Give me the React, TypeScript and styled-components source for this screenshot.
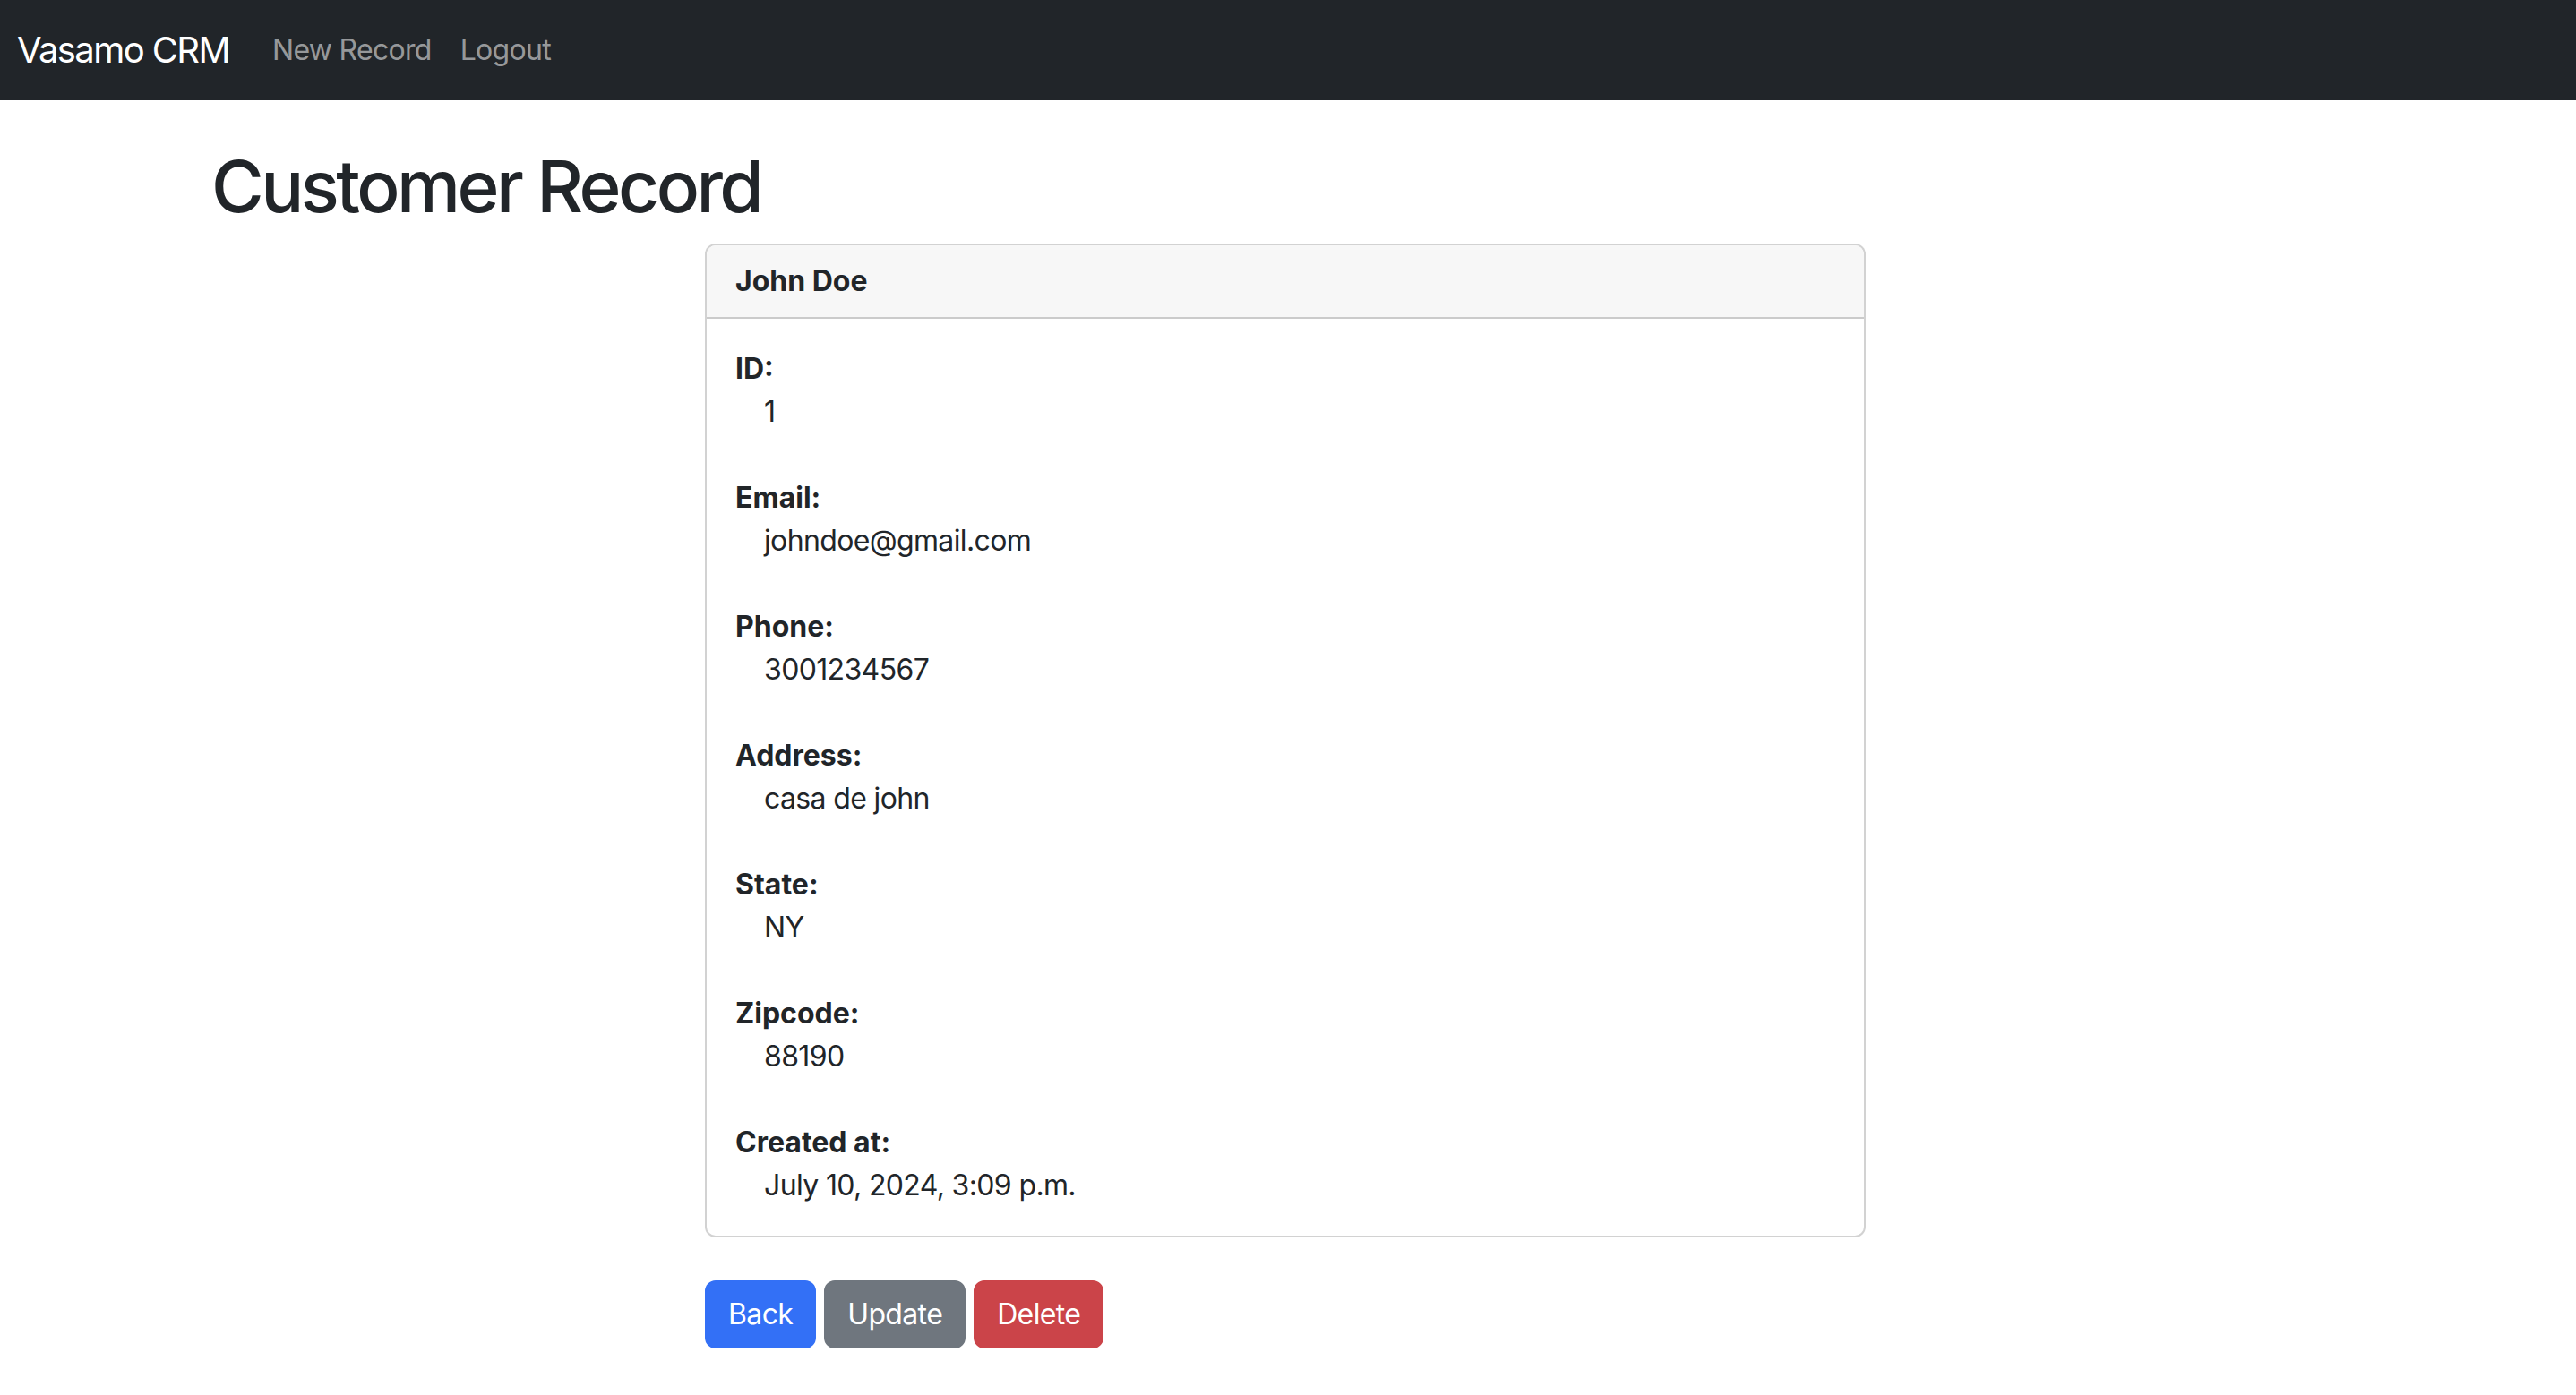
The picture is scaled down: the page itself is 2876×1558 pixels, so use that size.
import React from "react";
import styled, { createGlobalStyle } from "styled-components";

const GlobalStyle = createGlobalStyle`
  * { box-sizing: border-box; }
  html, body { margin: 0; padding: 0; background: #ffffff; }
  body {
    font-family: Inter, "Noto Sans", "Liberation Sans", sans-serif;
    color: #212529;
    -webkit-font-smoothing: antialiased;
  }
`;

const Navbar = styled.nav`
  display: flex;
  align-items: center;
  background: #212529;
  padding: 16px 24px 16px 19px;
  height: 112px;
`;

const Brand = styled.a`
  font-size: 40px;
  line-height: 60px;
  padding: 10px 0;
  margin-right: 32px;
  color: #ffffff;
  text-decoration: none;
  letter-spacing: -0.04em;
`;

const NavList = styled.div`
  display: flex;
  align-items: center;
`;

const NavLink = styled.a`
  font-size: 32px;
  line-height: 48px;
  padding: 16px;
  color: rgba(255, 255, 255, 0.55);
  text-decoration: none;
  letter-spacing: -0.022em;
`;

const Page = styled.main`
  padding: 48px 242px 0 236px;
`;

const Title = styled.h1`
  font-size: 80px;
  font-weight: 500;
  line-height: 96px;
  margin: 0 0 16px 0;
  letter-spacing: -0.044em;
`;

const Column = styled.div`
  width: 1296px;
  margin: 0 auto;
`;

const Card = styled.section`
  border: 2px solid rgba(0, 0, 0, 0.175);
  border-radius: 12px;
  overflow: hidden;
  background: #fff;
`;

const CardHeader = styled.header`
  background: #f7f7f7;
  border-bottom: 2px solid rgba(0, 0, 0, 0.175);
  padding: 16px 32px;
  font-size: 32px;
  line-height: 48px;
  font-weight: 700;
`;

const CardBody = styled.div`
  padding: 32px;
  display: flex;
  flex-direction: column;
  gap: 48px;
`;

const Field = styled.div`
  display: flex;
  flex-direction: column;
  font-size: 32px;
  line-height: 48px;
`;

const Label = styled.strong`
  font-weight: 700;
`;

const Value = styled.span`
  padding-left: 32px;
  letter-spacing: -0.02em;
`;

const Actions = styled.div`
  display: flex;
  gap: 9px;
  margin-top: 48px;
`;

const Button = styled.button<{ $bg: string }>`
  font-family: inherit;
  font-size: 32px;
  line-height: 48px;
  padding: 12px 24px;
  border: 2px solid ${(p) => p.$bg};
  background: ${(p) => p.$bg};
  color: #fff;
  border-radius: 12px;
  letter-spacing: -0.02em;
  cursor: pointer;
`;

const fields: [string, string][] = [
  ["ID:", "1"],
  ["Email:", "johndoe@gmail.com"],
  ["Phone:", "3001234567"],
  ["Address:", "casa de john"],
  ["State:", "NY"],
  ["Zipcode:", "88190"],
  ["Created at:", "July 10, 2024, 3:09 p.m."],
];

export default function App() {
  return (
    <>
      <GlobalStyle />
      <Navbar>
        <Brand href="#">Vasamo CRM</Brand>
        <NavList>
          <NavLink href="#">New Record</NavLink>
          <NavLink href="#">Logout</NavLink>
        </NavList>
      </Navbar>
      <Page>
        <Title>Customer Record</Title>
        <Column>
          <Card>
            <CardHeader>John Doe</CardHeader>
            <CardBody>
              {fields.map(([label, value]) => (
                <Field key={label}>
                  <Label>{label}</Label>
                  <Value>{value}</Value>
                </Field>
              ))}
            </CardBody>
          </Card>
          <Actions>
            <Button $bg="#3370f6">Back</Button>
            <Button $bg="#6f767e">Update</Button>
            <Button $bg="#cb4449">Delete</Button>
          </Actions>
        </Column>
      </Page>
    </>
  );
}
